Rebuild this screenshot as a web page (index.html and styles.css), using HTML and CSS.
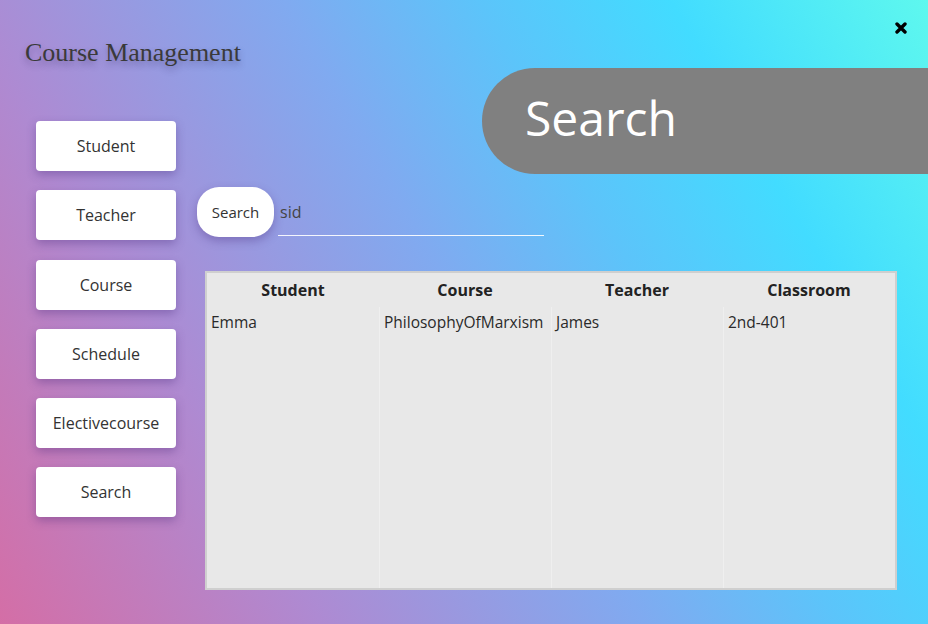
FILE: index.html
```html
<!DOCTYPE html>
<html lang="en">
<head>
<meta charset="utf-8">
<title>Course Management</title>
<link rel="stylesheet" href="styles.css">
</head>
<body>
<div class="app">
  <header class="header">
    <h1 class="title">Course Management</h1>
    <button class="close" aria-label="Close">
      <svg width="12" height="12" viewBox="0 0 12 12"><path d="M2 2 L10 10 M10 2 L2 10" stroke="#000" stroke-width="3.4" stroke-linecap="round"/></svg>
    </button>
  </header>
  <div class="main">
    <nav class="nav">
      <button class="nav-btn">Student</button>
      <button class="nav-btn">Teacher</button>
      <button class="nav-btn">Course</button>
      <button class="nav-btn">Schedule</button>
      <button class="nav-btn">Electivecourse</button>
      <button class="nav-btn">Search</button>
    </nav>
    <section class="content">
      <div class="banner">Search</div>
      <div class="search-row">
        <button class="search-btn">Search</button>
        <div class="search-input">sid</div>
      </div>
      <div class="grid">
        <div class="th">Student</div>
        <div class="th">Course</div>
        <div class="th">Teacher</div>
        <div class="th">Classroom</div>
        <div class="td">Emma</div>
        <div class="td sep">PhilosophyOfMarxism</div>
        <div class="td sep">James</div>
        <div class="td sep">2nd-401</div>
        <div class="td"></div>
        <div class="td sep"></div>
        <div class="td sep"></div>
        <div class="td sep"></div>
      </div>
    </section>
  </div>
</div>
</body>
</html>
```
FILE: styles.css
```css
html, body {
  margin: 0;
  padding: 0;
}
body {
  width: 928px;
  height: 624px;
  overflow: hidden;
  font-family: "Open Sans", "Noto Sans", sans-serif;
  background: linear-gradient(60deg, #d46ea6 0%, #ae8ad2 25%, #80aaf0 50%, #5cc4fa 65%, #42dcff 80%, #5ef8ee 100%);
}
.app {
  width: 928px;
  height: 624px;
  display: flex;
  flex-direction: column;
}
.header {
  display: flex;
  justify-content: space-between;
  align-items: flex-start;
  height: 68px;
}
.title {
  margin: 38px 0 0 25px;
  font-family: "Liberation Serif", serif;
  font-weight: normal;
  font-size: 26px;
  line-height: 30px;
  color: #3a3a3a;
  text-shadow: 0 4px 6px rgba(40, 30, 80, 0.35);
}
.close {
  margin: 22px 21px 0 0;
  padding: 0;
  border: 0;
  background: none;
  width: 12px;
  height: 12px;
  display: flex;
}
.main {
  flex: 1;
  display: flex;
}
.nav {
  display: flex;
  flex-direction: column;
  gap: 19.3px;
  padding: 53px 0 0 36px;
  width: 140px;
}
.nav-btn {
  height: 50px;
  border: 0;
  border-radius: 4px;
  background: #fff;
  font-family: "Open Sans", "Noto Sans", sans-serif;
  font-size: 16px;
  color: #333;
  box-shadow: 0 4px 10px rgba(70, 40, 120, 0.35);
  padding: 0;
}
.content {
  flex: 1;
  display: flex;
  flex-direction: column;
  margin-left: 21px;
}
.banner {
  align-self: flex-end;
  width: 403px;
  height: 106px;
  padding-left: 43px;
  background: #808080;
  border-radius: 53px 0 0 53px;
  color: #fff;
  font-size: 48px;
  line-height: 100px;
}
.search-row {
  display: flex;
  align-items: flex-end;
  margin-top: 13px;
  height: 50px;
}
.search-btn {
  width: 77px;
  height: 50px;
  border: 0;
  border-radius: 22px;
  background: #fff;
  font-family: "Open Sans", "Noto Sans", sans-serif;
  font-size: 15px;
  color: #333;
  padding: 0;
  box-shadow: 0 4px 10px rgba(70, 40, 120, 0.35);
}
.search-input {
  margin: 0 0 1px 4px;
  width: 266px;
  height: 49px;
  line-height: 50px;
  padding-left: 2px;
  font-size: 16px;
  color: #444;
  border-bottom: 1.5px solid rgba(255, 255, 255, 0.9);
  box-sizing: border-box;
}
.grid {
  margin: 34px 0 0 8px;
  width: 692px;
  height: 319px;
  box-sizing: border-box;
  border: 2px solid #cfcfcf;
  background: #e8e8e8;
  display: grid;
  grid-template-columns: repeat(4, 1fr);
  grid-template-rows: 34px 34px 1fr;
}
.th {
  text-align: center;
  font-weight: bold;
  font-size: 16px;
  color: #222;
  line-height: 34px;
}
.td {
  font-size: 15.5px;
  color: #2a2a2a;
  padding-left: 4px;
  line-height: 30px;
}
.sep {
  border-left: 1px solid #efefef;
}
```
